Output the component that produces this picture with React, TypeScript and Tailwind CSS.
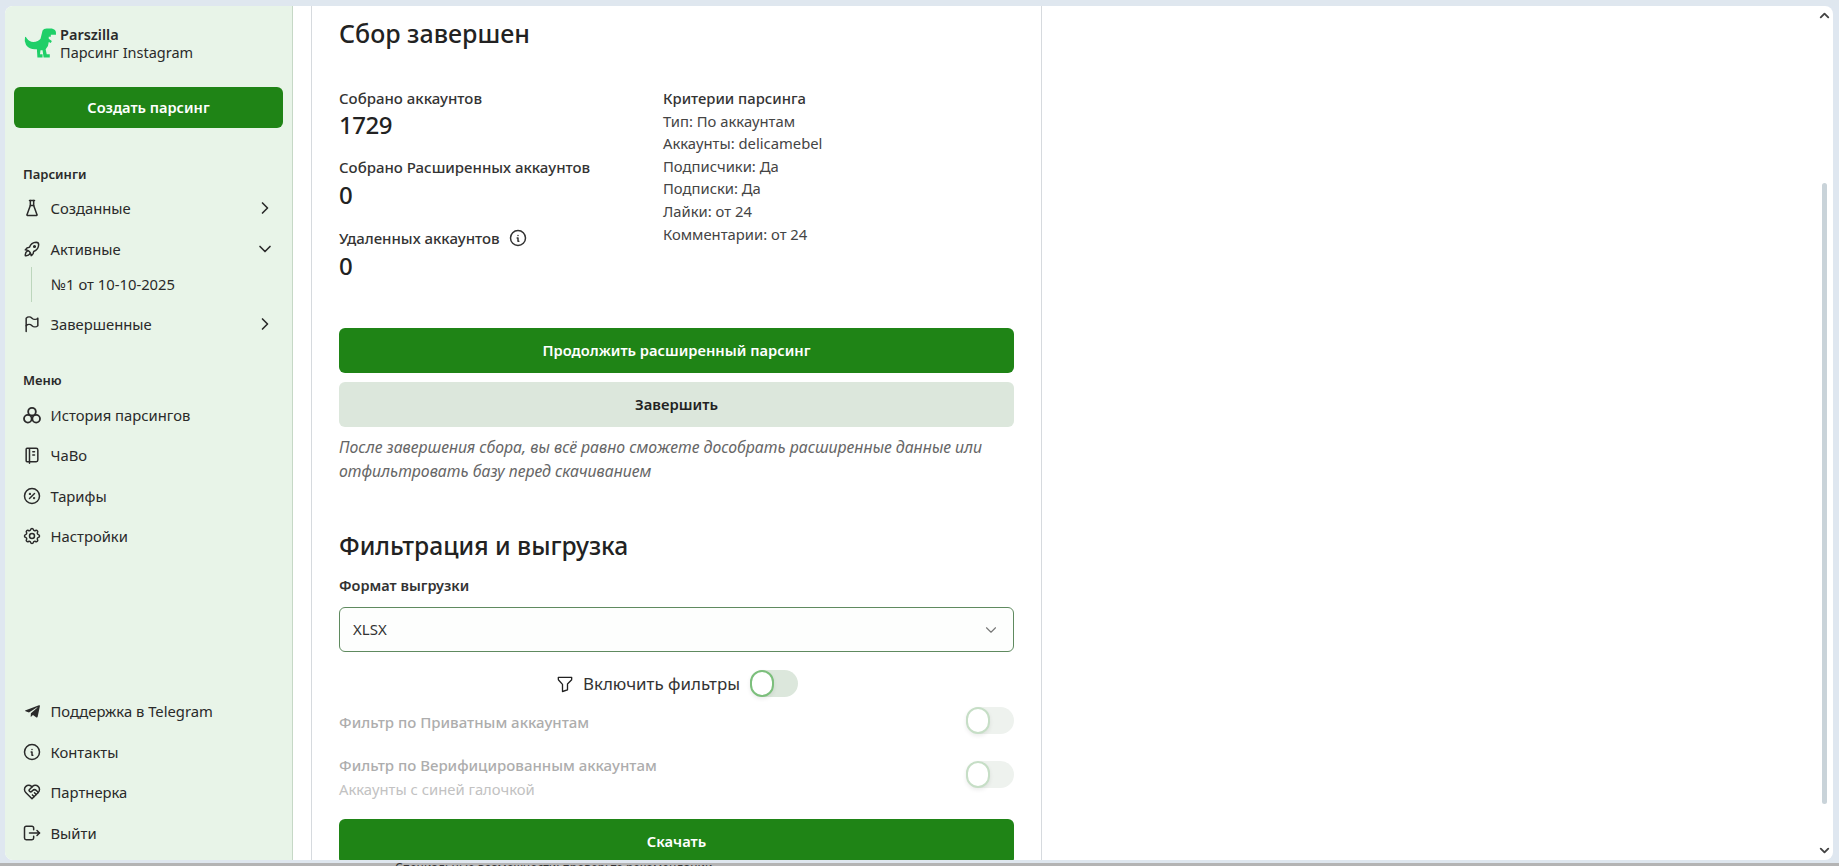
import React from "react";
import { TbFlask, TbRocket, TbFlag, TbChevronRight, TbChevronDown, TbChevronUp, TbNotebook, TbDiscount, TbSettings, TbInfoCircle, TbHeartHandshake, TbLogout, TbFilter } from "react-icons/tb";
import { FaTelegramPlane } from "react-icons/fa";

const Dino = () => (
  <svg width="33" height="31" viewBox="0 0 32 29" fill="#1fcf68" className="mt-[3px] -ml-[1px] shrink-0">
    <path d="M18 2 Q19 0 22 0 H27 Q31 1 31 4 V6 H26 V8 H24 L24 10 L27 12 L26 14 L24 13 Q24 17 21 20 L22 25 H25 V28 H19 L18 21 L16 21 L15.5 25 H18 V28 H13 L12.5 20 Q6 21 2 16 Q0 12 1 8 Q2 8 3 10 Q5 13 9 13 Q14 13 16 10 Z" />
  </svg>
);

const Toggle = ({ dim }: { dim?: boolean }) => (
  <div className={`relative h-[27px] w-[48px] shrink-0 rounded-full ${dim ? "bg-[#eef2ee]" : "bg-[#dce7dc]"}`}>
    <div className={`absolute left-0 top-0 h-[27px] w-[24px] rounded-full border-[2px] bg-white shadow-[0_2px_4px_rgba(0,0,0,0.08)] ${dim ? "border-[#c6dec6]" : "border-[#7cbf7c]"}`} />
  </div>
);

const Item = ({ icon, label, chev }: { icon: React.ReactNode; label: string; chev?: "r" | "d" }) => (
  <div className="flex h-[40.5px] items-center pl-[17px] pr-[17px] text-[14.8px] text-[#2a2a2a]">
    <span className="flex w-[28.5px] shrink-0 items-center">{icon}</span>
    <span className="flex-1">{label}</span>
    {chev === "r" && <TbChevronRight size={20} />}
    {chev === "d" && <TbChevronDown size={20} />}
  </div>
);

const I = { size: 20, strokeWidth: 1.8 };

const Num = ({ children }: { children: React.ReactNode }) => (
  <div className="text-[24px] font-medium leading-[34px] tracking-[-0.5px] text-[#222]">{children}</div>
);
const Lbl = ({ children }: { children: React.ReactNode }) => (
  <div className="flex items-center gap-[8px] text-[15px] font-medium leading-[22px] text-[#333]">{children}</div>
);

const BtnGreen = ({ children }: { children: React.ReactNode }) => (
  <div className="flex h-[45px] w-full shrink-0 items-center justify-center rounded-[6px] bg-[#1f8416] text-[14.7px] font-semibold text-white">{children}</div>
);

export default function App() {
  return (
    <div className="flex h-screen w-full flex-col overflow-hidden bg-[#dfe7f0] font-['Noto_Sans','Open_Sans',sans-serif]">
      <div className="h-[6px] shrink-0 bg-[#dfe7ef]" />
      <div className="flex min-h-0 flex-1 pl-[5px] pr-[6px]">
        <div className="flex flex-1 overflow-hidden rounded-[8px] bg-white">
          <aside className="flex w-[288px] shrink-0 flex-col border-r border-[#c6d8c6] bg-[#e8f4e8]">
            <div className="flex items-start pl-[20px] pt-[19px]">
              <Dino />
              <div className="ml-[3px] text-[14.5px] leading-[18px] text-[#2a2a2a]">
                <div className="font-semibold">Parszilla</div>
                <div>Парсинг Instagram</div>
              </div>
            </div>
            <div className="mx-[9px] mt-[26px] flex h-[41px] shrink-0 items-center justify-center rounded-[6px] bg-[#1f8416] text-[14.6px] font-semibold text-white">
              Создать парсинг
            </div>
            <div className="mt-[37px] pl-[18px] text-[13px] font-semibold leading-[18px] text-[#2a2a2a]">Парсинги</div>
            <div className="mt-[5px]">
              <Item icon={<TbFlask {...I} />} label="Созданные" chev="r" />
              <Item icon={<TbRocket {...I} />} label="Активные" chev="d" />
              <div className="-mt-[2px] mb-[2px] ml-[26px] flex h-[35px] items-center border-l border-[#bcd6bc] pl-[19px] text-[14.8px] text-[#2a2a2a]">№1 от 10-10-2025</div>
              <Item icon={<TbFlag {...I} />} label="Завершенные" chev="r" />
            </div>
            <div className="mt-[26px] pl-[18px] text-[13px] font-semibold leading-[18px] text-[#2a2a2a]">Меню</div>
            <div className="mt-[6px]">
              <Item icon={
                <svg width="20" height="20" viewBox="0 0 24 24" fill="none" stroke="currentColor" strokeWidth="2.2">
                  <circle cx="12" cy="8" r="4.6" /><circle cx="7" cy="16.5" r="4.6" /><circle cx="17" cy="16.5" r="4.6" />
                </svg>
              } label="История парсингов" />
              <Item icon={<TbNotebook {...I} />} label="ЧаВо" />
              <Item icon={<TbDiscount {...I} />} label="Тарифы" />
              <Item icon={<TbSettings {...I} />} label="Настройки" />
            </div>
            <div className="mt-auto pb-[7px]">
              <Item icon={<FaTelegramPlane size={17} className="ml-[2px]" />} label="Поддержка в Telegram" />
              <Item icon={<TbInfoCircle {...I} />} label="Контакты" />
              <Item icon={<TbHeartHandshake {...I} />} label="Партнерка" />
              <Item icon={<TbLogout {...I} />} label="Выйти" />
            </div>
          </aside>

          <div className="w-[18px] shrink-0" />

          <main className="flex w-[731px] shrink-0 flex-col overflow-hidden border-x border-[#d6dade] px-[27px] pt-[10px]">
            <h1 className="text-[25px] font-medium leading-[34px] text-[#222]">Сбор завершен</h1>
            <div className="mt-[37px] flex">
              <div className="w-[324px] shrink-0">
                <Lbl>Собрано аккаунтов</Lbl>
                <div className="-mt-[1px]"><Num>1729</Num></div>
                <div className="mt-[14px]"><Lbl>Собрано Расширенных аккаунтов</Lbl></div>
                <Num>0</Num>
                <div className="mt-[15px]">
                  <Lbl>Удаленных аккаунтов <TbInfoCircle size={20} strokeWidth={1.8} /></Lbl>
                </div>
                <Num>0</Num>
              </div>
              <div className="text-[14.8px] leading-[22.6px] text-[#444]">
                <div className="font-medium text-[#333]">Критерии парсинга</div>
                <div>Тип: По аккаунтам</div>
                <div>Аккаунты: delicamebel</div>
                <div>Подписчики: Да</div>
                <div>Подписки: Да</div>
                <div>Лайки: от 24</div>
                <div>Комментарии: от 24</div>
              </div>
            </div>

            <div className="mt-[45px]"><BtnGreen>Продолжить расширенный парсинг</BtnGreen></div>
            <div className="mt-[9px] flex h-[45px] shrink-0 items-center justify-center rounded-[6px] bg-[#dce7dc] text-[14.8px] font-semibold text-[#222]">Завершить</div>
            <p className="mt-[9px] text-[15.8px] italic leading-[23.5px] text-[#666]">
              После завершения сбора, вы всё равно сможете дособрать расширенные данные или отфильтровать базу перед скачиванием
            </p>

            <h2 className="mt-[46px] text-[24.6px] font-medium leading-[34px] text-[#222]">Фильтрация и выгрузка</h2>
            <div className="mt-[11px] text-[14.5px] font-semibold leading-[22px] text-[#333]">Формат выгрузки</div>
            <div className="mt-[11px] flex h-[45px] shrink-0 items-center justify-between rounded-[6px] border border-[#5f8a5f] bg-[#fdfefd] pl-[13px] pr-[13px] text-[15px] text-[#333]">
              <span>XLSX</span>
              <TbChevronDown size={18} strokeWidth={1.5} className="text-[#777]" />
            </div>
            <div className="mt-[18px] flex items-center justify-center">
              <TbFilter size={20} strokeWidth={1.6} className="mr-[8px] text-[#222]" />
              <span className="mr-[10px] text-[16.9px] text-[#333]">Включить фильтры</span>
              <Toggle />
            </div>
            <div className="mt-[10px] flex items-center justify-between">
              <span className="pt-[4px] text-[15px] font-medium text-[#adadad]">Фильтр по Приватным аккаунтам</span>
              <Toggle dim />
            </div>
            <div className="mt-[13px] flex items-center justify-between">
              <div className="pt-[6px] text-[15px] leading-[24px]">
                <div className="font-medium text-[#adadad]">Фильтр по Верифицированным аккаунтам</div>
                <div className="text-[14.8px] text-[#c2c2c2]">Аккаунты с синей галочкой</div>
              </div>
              <Toggle dim />
            </div>
            <div className="mt-[18px]"><BtnGreen>Скачать</BtnGreen></div>
          </main>

          <div className="relative flex-1">
            <TbChevronUp size={15} strokeWidth={3} className="absolute right-[1px] top-[2px] text-[#444]" />
            <div className="absolute right-[6px] top-[177px] bottom-[56px] w-[5px] rounded-full bg-[#c9d3d9]" />
            <TbChevronDown size={15} strokeWidth={3} className="absolute bottom-[2px] right-[1px] text-[#444]" />
          </div>
        </div>
      </div>
      <div className="h-[3px] shrink-0 bg-[#dfe7ef]" />
      <div className="h-[3px] shrink-0 overflow-hidden bg-[#b4b4b4] pl-[395px] text-[12px] leading-[10px] text-[#333]">
        Специальные возможности: проверьте рекомендации
      </div>
    </div>
  );
}
